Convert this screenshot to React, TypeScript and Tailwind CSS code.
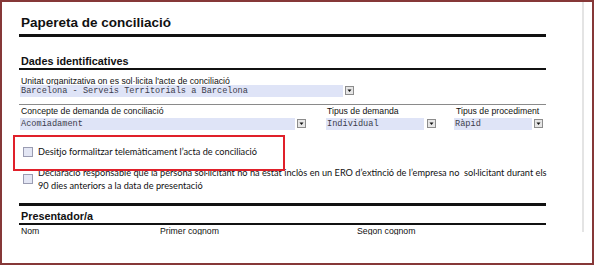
import React from 'react';

const sans = "font-['Liberation_Sans',Arial,sans-serif]";
const mono = "font-['Liberation_Mono','Courier_New',monospace]";
const body = "font-['Lato','Open_Sans',sans-serif]";

function Arrow() {
  return (
    <svg width="9" height="9" viewBox="0 0 9 9" className="shrink-0">
      <rect x="0.5" y="0.5" width="8" height="8" fill="#e6e6e6" stroke="#8c8c8c" />
      <path d="M2.5 3.5h4L4.5 6z" fill="#111" />
    </svg>
  );
}

function Select({ value, width, gap }: { value: string; width: string; gap: string }) {
  return (
    <div className={`flex h-[12px] items-center ${gap}`}>
      <div className={`${width} h-[12px] bg-[#dfe4f7] pl-[1px] text-[8.6px] leading-[12px] text-[#3c3c4c] ${mono} whitespace-nowrap overflow-hidden`}>
        {value}
      </div>
      <Arrow />
    </div>
  );
}

function Checkbox() {
  return <div className="w-[10px] h-[10px] shrink-0 border border-[#9a9cb2] bg-[#e3e6f4]" />;
}

export default function App() {
  return (
    <div className="relative w-[594px] h-[265px] overflow-hidden border-2 border-[#863838] bg-white">
      <div className="w-[582px] h-[230px] border-r-2 border-[#e4e4e4] pl-[17px] pt-[14px] text-[#111]">
        <div className={`${sans} text-[13.5px] leading-none font-bold pl-[2px]`}>Papereta de conciliació</div>
        <div className="mt-[4.5px] w-[527px] h-[3px] bg-[#111]" />

        <div className={`${sans} mt-[19px] text-[10.8px] leading-none font-bold pl-[2px]`}>Dades identificatives</div>
        <div className="mt-[1.2px] w-[527px] h-[2px] bg-[#111]" />

        <div className={`${sans} mt-[7px] h-[8px] text-[8.7px] leading-none pl-[2px] whitespace-nowrap`}>
          Unitat organitzativa on es sol·licita l'acte de conciliació
        </div>
        <div className="ml-[1px]">
          <Select value="Barcelona - Serveis Territorials a Barcelona" width="w-[323px]" gap="gap-[2px]" />
        </div>
        <div className="mt-[7px] w-[527px] h-px bg-[#8a8a8a]" />

        <div className="ml-[1px] mt-[2px] flex">
          <div className="w-[306px]">
            <div className={`${sans} h-[11px] text-[8.7px] leading-none pl-[1px]`}>Concepte de demanda de conciliació</div>
            <Select value="Acomiadament" width="w-[275px]" gap="gap-[2px]" />
          </div>
          <div className="w-[128px]">
            <div className={`${sans} h-[11px] text-[8.7px] leading-none pl-[1px]`}>Tipus de demanda</div>
            <Select value="Individual" width="w-[98px]" gap="gap-[3px]" />
          </div>
          <div>
            <div className={`${sans} h-[11px] text-[8.7px] leading-none pl-[2px]`}>Tipus de procediment</div>
            <Select value="Ràpid" width="w-[78px]" gap="gap-[2px]" />
          </div>
        </div>

        <div className={`${body} mt-[17px] ml-[4px] flex h-[10px] items-center gap-[5px]`}>
          <Checkbox />
          <span className="text-[9.2px] leading-none whitespace-nowrap">Desitjo formalitzar telemàticament l’acta de conciliació</span>
        </div>

        <div className={`${body} mt-[9px] ml-[4px] flex items-center gap-[5px]`}>
          <Checkbox />
          <p className="text-[9.2px] leading-[13.5px] whitespace-pre">
            {'Declaració responsable que la persona sol·licitant no ha estat inclòs en un ERO d’extinció de l’empresa no  sol·licitant durant els\n90 dies anteriors a la data de presentació'}
          </p>
        </div>

        <div className="mt-[10px] w-[527px] h-[3px] bg-[#111]" />
        <div className={`${sans} mt-[4.6px] text-[10.8px] leading-none font-bold pl-[2px]`}>Presentador/a</div>
        <div className="mt-[1.6px] w-[527px] h-[2px] bg-[#111]" />

        <div className={`${sans} mt-[2px] h-[8px] overflow-hidden flex text-[8.7px] leading-none pl-[2px]`}>
          <span className="w-[139px]">Nom</span>
          <span className="w-[197px]">Primer cognom</span>
          <span>Segon cognom</span>
        </div>
      </div>

      <div className="absolute left-[11px] top-[133px] w-[272px] h-[36px] border-2 border-[#e0202a]" />
    </div>
  );
}
